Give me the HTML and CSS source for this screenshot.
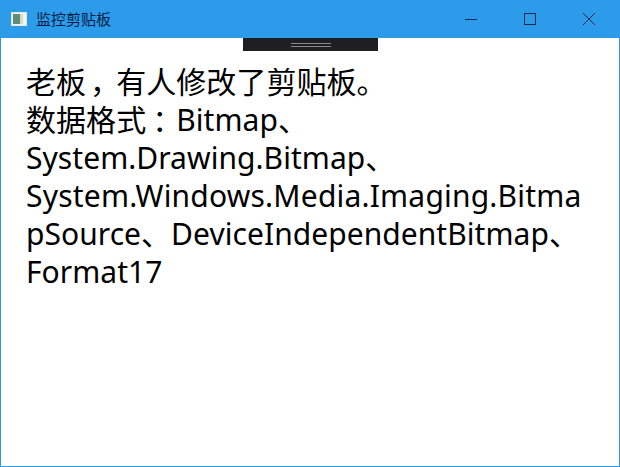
FILE: index.html
```html
<!DOCTYPE html>
<html lang="zh-CN">
<head>
<meta charset="utf-8">
<title>监控剪贴板</title>
<link rel="stylesheet" href="styles.css">
</head>
<body>
<div class="window">
  <header class="titlebar">
    <svg class="app-icon" width="16" height="14" viewBox="0 0 16 14">
      <rect x="0.5" y="0.5" width="15" height="13" fill="#f4f4ee" stroke="#dfe6ea"/>
      <rect x="2" y="2" width="7" height="10" fill="#5c8f7a"/>
      <rect x="9" y="2" width="3" height="10" fill="#d8dcc0"/>
    </svg>
    <span class="title">监控剪贴板</span>
    <div class="controls">
      <div class="control">
        <svg width="12" height="12" viewBox="0 0 12 12"><path d="M0 6.5H12" stroke="#0a2a55" fill="none"/></svg>
      </div>
      <div class="control">
        <svg width="12" height="12" viewBox="0 0 12 12"><rect x="0.5" y="0.5" width="11" height="11" stroke="#0a2a55" fill="none"/></svg>
      </div>
      <div class="control">
        <svg width="14" height="14" viewBox="0 0 14 14"><path d="M1 1L13 13M13 1L1 13" stroke="#0a2a55" fill="none"/></svg>
      </div>
    </div>
  </header>
  <div class="toolbar-wrap">
    <div class="toolbar"><span class="grip"></span></div>
  </div>
  <main class="message">老板<span class="punct comma">，</span>有人修改了剪贴板。<br>数据格式<span class="punct colon">：</span>Bitmap、<br>System.Drawing.Bitmap、<br><span class="long">System.Windows.Media.Imaging.Bitma</span><br>pSource、DeviceIndependentBitmap、<br>Format17</main>
</div>
</body>
</html>
```
FILE: styles.css
```css
* { box-sizing: border-box; }
html, body { margin: 0; height: 100%; }
.window {
  width: 620px;
  height: 467px;
  border: 1px solid #2b9bea;
  border-top: 0;
  background: #fff;
  display: flex;
  flex-direction: column;
  overflow: hidden;
}
.titlebar {
  height: 38px;
  flex: none;
  background: #2b9bea;
  display: flex;
  align-items: center;
  padding-left: 10px;
}
.app-icon { flex: none; }
.title {
  margin-left: 9px;
  font: 15px/18px "Noto Sans CJK SC", sans-serif;
  color: #021d45;
}
.controls { margin-left: auto; display: flex; height: 100%; padding-right: 1px; }
.control {
  width: 59px;
  display: flex;
  align-items: center;
  justify-content: center;
}
.toolbar-wrap { display: flex; justify-content: center; height: 13px; flex: none; padding-left: 1px; }
.toolbar {
  width: 135px;
  height: 13px;
  background: #1f1f22;
  display: flex;
  align-items: center;
  justify-content: center;
}
.grip {
  width: 40px;
  height: 4px;
  border-top: 1px solid #8a8a8e;
  border-bottom: 1px solid #8a8a8e;
}
.message {
  padding: 12px 0 0 25px;
  font: 30px/38px "Noto Sans", "Noto Sans CJK SC", sans-serif;
  color: #000;
  white-space: nowrap;
  letter-spacing: 0.05px;
}
.punct { font-feature-settings: "halt"; }
.comma { margin-left: 4px; margin-right: 11px; }
.colon { margin-left: 6px; margin-right: 9px; }
.long { letter-spacing: 0.2px; }
```
